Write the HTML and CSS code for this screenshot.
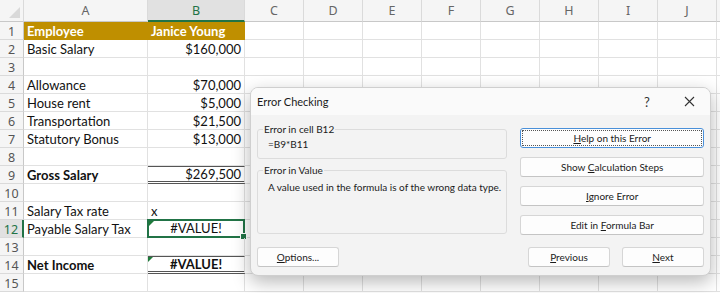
FILE: index.html
```html
<!DOCTYPE html>
<html>
<head>
<meta charset="utf-8">
<link rel="stylesheet" href="styles.css">
</head>
<body>
<div class="sheet">
  <div class="hdr corner"><span class="corner-tri"></span></div>
  <div class="hdr">A</div>
  <div class="hdr hdr-sel">B</div>
  <div class="hdr">C</div><div class="hdr">D</div><div class="hdr">E</div><div class="hdr">F</div>
  <div class="hdr">G</div><div class="hdr">H</div><div class="hdr">I</div><div class="hdr">J</div>
  <div class="hdr hdr-end"></div>

  <div class="rn">1</div><div class="c gold">Employee</div><div class="c gold">Janice Young</div><div class="rest"></div>
  <div class="rn">2</div><div class="c">Basic Salary</div><div class="c r">$160,000</div><div class="rest"></div>
  <div class="rn">3</div><div class="c"></div><div class="c"></div><div class="rest"></div>
  <div class="rn">4</div><div class="c">Allowance</div><div class="c r">$70,000</div><div class="rest"></div>
  <div class="rn">5</div><div class="c">House rent</div><div class="c r">$5,000</div><div class="rest"></div>
  <div class="rn">6</div><div class="c">Transportation</div><div class="c r">$21,500</div><div class="rest"></div>
  <div class="rn">7</div><div class="c">Statutory Bonus</div><div class="c r">$13,000</div><div class="rest"></div>
  <div class="rn">8</div><div class="c"></div><div class="c"></div><div class="rest"></div>
  <div class="rn">9</div><div class="c b">Gross Salary</div><div class="c r total">$269,500</div><div class="rest"></div>
  <div class="rn">10</div><div class="c"></div><div class="c"></div><div class="rest"></div>
  <div class="rn">11</div><div class="c">Salary Tax rate</div><div class="c">x</div><div class="rest"></div>
  <div class="rn rn-sel">12</div><div class="c">Payable Salary Tax</div><div class="c ctr selcell"><span class="err-tri"></span>#VALUE!<span class="handle"></span></div><div class="rest"></div>
  <div class="rn">13</div><div class="c"></div><div class="c"></div><div class="rest"></div>
  <div class="rn">14</div><div class="c b">Net Income</div><div class="c ctr b total"><span class="err-tri"></span>#VALUE!</div><div class="rest"></div>
  <div class="rn">15</div><div class="c"></div><div class="c"></div><div class="rest"></div>
</div>

<div class="dialog">
  <div class="titlebar">
    <span class="title">Error Checking</span>
    <span class="tb-btn help">?</span>
    <span class="tb-btn close"><svg width="11" height="11" viewBox="0 0 11 11"><path d="M1 1L10 10M10 1L1 10" stroke="#333" stroke-width="1.1" fill="none"/></svg></span>
  </div>
  <div class="body">
    <div class="left">
      <fieldset class="group g1">
        <legend>Error in cell B12</legend>
        <div class="formula">=B9*B11</div>
      </fieldset>
      <fieldset class="group g2">
        <legend>Error in Value</legend>
        <div class="msg">A value used in the formula is of the wrong data type.</div>
      </fieldset>
    </div>
    <div class="right">
      <button class="btn focus"><span class="focus-ring"><span><u>H</u>elp on this Error</span></span></button>
      <button class="btn"><span>Show <u>C</u>alculation Steps</span></button>
      <button class="btn"><span><u>I</u>gnore Error</span></button>
      <button class="btn"><span>Edit in <u>F</u>ormula Bar</span></button>
    </div>
  </div>
  <div class="footer">
    <button class="btn small"><span><u>O</u>ptions...</span></button>
    <div class="spacer"></div>
    <button class="btn small"><span><u>P</u>revious</span></button>
    <button class="btn small"><span><u>N</u>ext</span></button>
  </div>
</div>
</body>
</html>
```

FILE: styles.css
```css
html, body {
  margin: 0;
  padding: 0;
  background: #ffffff;
  overflow: hidden;
}
body {
  width: 720px;
  height: 293px;
  position: relative;
  font-family: Lato, "Noto Sans", sans-serif;
}
.sheet {
  display: grid;
  grid-template-columns: 24px 124px 97px repeat(8, 59px) 1fr;
  grid-template-rows: 22px repeat(15, 18px);
  font-size: 13px;
  color: #111;
}
.hdr {
  background: #f5f5f5;
  border-right: 1px solid #dadada;
  border-bottom: 1px solid #c8c8c8;
  box-sizing: border-box;
  color: #666;
  font-family: "Noto Sans", sans-serif;
  font-size: 12.5px;
  display: flex;
  align-items: center;
  justify-content: center;
}
.hdr-end { border-right: none; }
.corner { position: relative; }
.corner-tri {
  position: absolute;
  right: 3px;
  bottom: 3px;
  width: 0;
  height: 0;
  border-left: 11px solid transparent;
  border-bottom: 11px solid #d9d9d9;
}
.hdr-sel {
  background: #e1e1e1;
  color: #217346;
  border-bottom: 2px solid #217346;
}
.rn {
  background: #f5f5f5;
  border-right: 1px solid #c8c8c8;
  border-bottom: 1px solid #dadada;
  box-sizing: border-box;
  color: #555;
  font-family: "Noto Sans", sans-serif;
  font-size: 12.5px;
  display: flex;
  align-items: center;
  justify-content: center;
  padding-top: 1px;
}
.rn-sel {
  background: #e1e1e1;
  color: #217346;
  border-right: 2px solid #217346;
}
.c {
  border-right: 1px solid #e1e1e1;
  border-bottom: 1px solid #e1e1e1;
  box-sizing: border-box;
  padding: 1px 3px 0 3px;
  line-height: 17px;
  white-space: nowrap;
  overflow: visible;
  position: relative;
}
.rest {
  border-bottom: 1px solid #e1e1e1;
  box-sizing: border-box;
  grid-column: 4 / -1;
  background: repeating-linear-gradient(to right, transparent 0 58px, #e1e1e1 58px 59px);
}
.gold {
  background: #bf8f00;
  color: #fff;
  font-weight: bold;
  border-color: #bf8f00;
}
.r { text-align: right; }
.ctr { text-align: center; }
.b { font-weight: bold; }
.total {
  border-top: 1px solid #555;
  border-bottom: 3px double #555;
  line-height: 14px;
  padding-top: 0;
}
.selcell {
  border: 2px solid #217346;
  line-height: 14px;
  margin: -1px 0 0 -1px;
  padding-top: 0;
}
.handle {
  position: absolute;
  right: -4px;
  bottom: -4px;
  width: 5px;
  height: 5px;
  background: #217346;
  border: 1px solid #fff;
}
.err-tri {
  position: absolute;
  left: 0;
  top: 0;
  width: 0;
  height: 0;
  border-top: 5px solid #1e7b3a;
  border-right: 5px solid transparent;
}

/* dialog */
.dialog {
  position: absolute;
  left: 250px;
  top: 87px;
  width: 461px;
  height: 189px;
  box-sizing: border-box;
  background: #f3f3f3;
  border: 1px solid #cfcfcf;
  border-radius: 8px;
  box-shadow: 0 6px 18px rgba(0, 0, 0, 0.28);
  font-family: Lato, "Noto Sans", sans-serif;
  font-size: 10px;
  color: #1b1b1b;
  display: flex;
  flex-direction: column;
  overflow: hidden;
}
.titlebar {
  height: 27px;
  flex: none;
  background: #fafafa;
  display: flex;
  align-items: center;
  padding-left: 6px;
}
.title {
  font-size: 11px;
  flex: 1;
}
.tb-btn {
  width: 42px;
  display: flex;
  justify-content: center;
  align-items: center;
}
.help { font-size: 13px; color: #333; }
.body {
  display: flex;
  padding: 7px 6px 0 6px;
  gap: 13px;
}
.left {
  width: 251px;
  display: flex;
  flex-direction: column;
  gap: 4px;
}
.group {
  margin: 0;
  border: 1px solid #dcdcdc;
  border-radius: 3px;
  padding: 0 0 0 10px;
  min-width: 0;
}
.group legend {
  padding: 0 1px;
  margin-left: -5px;
  font-size: 10px;
  line-height: 14px;
}
.g1 { height: 37px; box-sizing: border-box; }
.g2 { height: 71px; box-sizing: border-box; }
.formula { padding-top: 2px; }
.msg { padding-top: 4px; white-space: nowrap; }
.right {
  width: 184px;
  display: flex;
  flex-direction: column;
  gap: 9px;
  padding-top: 6px;
}
.btn {
  font-family: Lato, "Noto Sans", sans-serif;
  font-size: 10px;
  color: #1b1b1b;
  background: #fdfdfd;
  border: 1px solid #d6d6d6;
  border-bottom-color: #c4c4c4;
  border-radius: 3px;
  height: 20px;
  padding: 0;
  margin: 0;
  display: flex;
  align-items: center;
  justify-content: center;
}
.btn.focus {
  border: 1px solid #4a90d9;
  padding: 1px;
}
.focus-ring {
  flex: 1;
  align-self: stretch;
  border: 1px dotted #555;
  display: flex;
  align-items: center;
  justify-content: center;
}
.footer {
  display: flex;
  padding: 12px 6px 0 6px;
  gap: 12px;
}
.spacer { flex: 1; }
.btn.small { width: 82px; }
```
